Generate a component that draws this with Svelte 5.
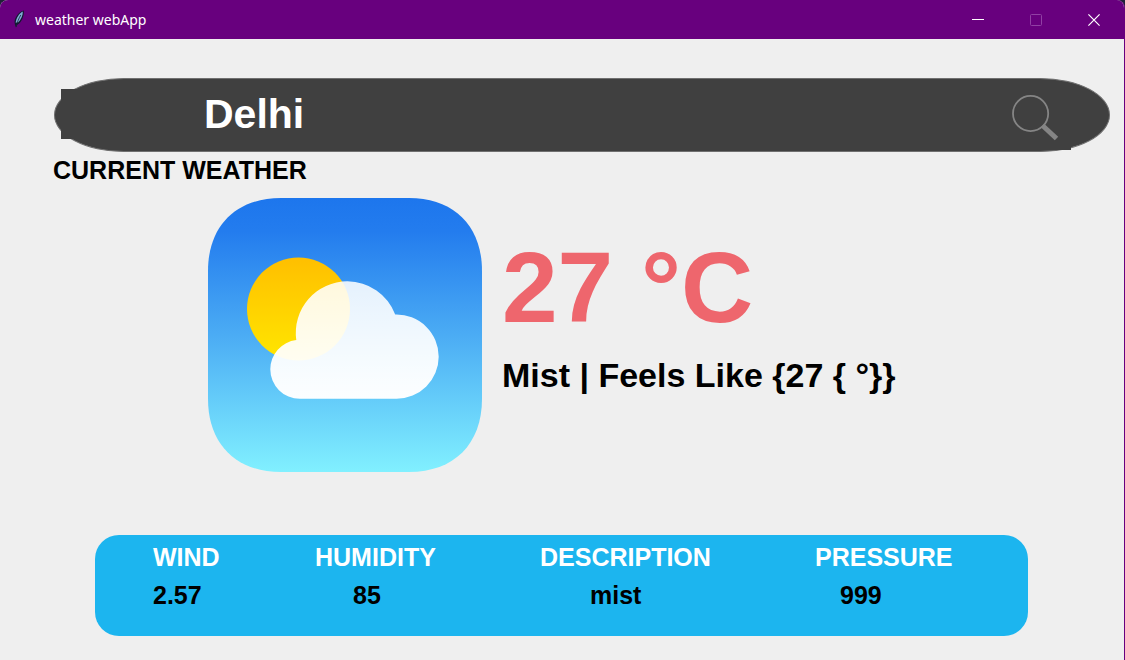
<script>
  let city = $state('Delhi');

  const stats = [
    { label: 'WIND', value: '2.57', indent: 'none' },
    { label: 'HUMIDITY', value: '85', indent: 'medium' },
    { label: 'DESCRIPTION', value: 'mist', indent: 'large' },
    { label: 'PRESSURE', value: '999', indent: 'small' }
  ];
  const feels = 'Mist | Feels Like {27 { °}}';
</script>

<div class="window">
  <header class="titlebar">
    <svg class="feather" width="14" height="20" viewBox="0 0 14 20" aria-hidden="true">
      <path d="M11.800 .6C7.500 1.600 3 6.500 2.500 12L3 15L4 17.500L5 15L7.500 13.300C10.600 10 12.300 5 11.800 .6Z" fill="#121a30" />
      <path d="M10.800 1.600C7.400 3.400 4 8 3.700 12.800L6.400 12.200C9.300 9 11 5.400 10.800 1.600Z" fill="#7fabd6" />
      <path d="M8.800 5C7 8 5.200 12 4.200 17" fill="none" stroke="#16203c" stroke-width=".8" />
    </svg>
    <span class="title">weather webApp</span>
    <div class="controls">
      <button type="button" aria-label="Minimize">
        <svg width="12" height="12" viewBox="0 0 12 12"><path d="M0 5.500H12" stroke="#fff" /></svg>
      </button>
      <button type="button" aria-label="Maximize" disabled>
        <svg width="12" height="12" viewBox="0 0 12 12"><rect x=".5" y=".5" width="11" height="11" rx="1" fill="none" stroke="#9140a4" /></svg>
      </button>
      <button type="button" aria-label="Close">
        <svg width="12" height="12" viewBox="0 0 12 12"><path d="M.4 .4L11.600 11.600M11.600 .4L.4 11.600" stroke="#fff" stroke-width="1.200" /></svg>
      </button>
    </div>
  </header>

  <main>
    <form class="search" onsubmit={(e) => e.preventDefault()}>
      <input type="text" aria-label="City" bind:value={city} />
      <button type="submit" aria-label="Search">
        <svg width="50" height="50" viewBox="0 0 50 50" aria-hidden="true">
          <circle cx="20.600" cy="21.500" r="17.600" fill="none" stroke="#858585" stroke-width="1.800" />
          <path d="M32.500 33.500L46.500 46.500" stroke="#858585" stroke-width="5" />
        </svg>
      </button>
    </form>

    <h1>CURRENT WEATHER</h1>

    <section class="current">
      <svg class="picture" width="274" height="274" viewBox="0 0 274 274" role="img" aria-label="Partly cloudy">
        <defs>
          <linearGradient id="sky" x1="0" y1="0" x2="0" y2="1">
            <stop offset="0" stop-color="#1d76ed" />
            <stop offset=".12" stop-color="#237cee" />
            <stop offset=".5" stop-color="#4bacf4" />
            <stop offset="1" stop-color="#81f0ff" />
          </linearGradient>
          <linearGradient id="sun" x1="0" y1="0" x2="0" y2="1">
            <stop offset="0" stop-color="#ffbf00" />
            <stop offset="1" stop-color="#ffe600" />
          </linearGradient>
          <linearGradient id="cloud" x1="0" y1="0" x2="0" y2="1">
            <stop offset="0" stop-color="#fff" stop-opacity=".87" />
            <stop offset="1" stop-color="#fff" stop-opacity=".98" />
          </linearGradient>
        </defs>
        <path d="M73 0H201C246 0 274 28 274 73V201C274 246 246 274 201 274H73C28 274 0 246 0 201V73C0 28 28 0 73 0Z" fill="url(#sky)" />
        <circle cx="90.500" cy="111" r="51.500" fill="url(#sun)" />
        <path d="M91.800 200.800A29.500 29.500 0 0 1 62.300 171.300A29.500 29.500 0 0 1 88.300 142A51.500 51.500 0 0 1 139.500 83.300A51.500 51.500 0 0 1 187.200 116.500A42.200 42.200 0 0 1 230.700 158.700A42.200 42.200 0 0 1 188.500 200.800Z" fill="url(#cloud)" />
      </svg>
      <div class="reading">
        <p class="temperature">27 °C</p>
        <p class="feels">{feels}</p>
      </div>
    </section>

    <dl class="stats">
      {#each stats as stat}
        <div>
          <dt>{stat.label}</dt>
          <dd class={stat.indent}>{stat.value}</dd>
        </div>
      {/each}
    </dl>
  </main>
</div>

<style>
  :global(body) {
    margin: 0;
    background: #1f2138;
  }

  .window {
    box-sizing: border-box;
    display: flex;
    flex-direction: column;
    min-height: 100vh;
    overflow: hidden;
    border-right: 1px solid #68007e;
    border-radius: 8px 8px 0 0;
    background: #efefef;
    font-family: "Liberation Sans", Arial, sans-serif;
    font-weight: bold;
    color: #000;
  }

  .titlebar {
    display: flex;
    align-items: center;
    height: 39px;
    padding-left: 12px;
    background: #68007e;
    color: #fff;
  }

  .title {
    margin-left: 9px;
    font: 14px "Noto Sans", "Segoe UI", sans-serif;
  }

  .controls {
    display: flex;
    align-self: stretch;
    margin-left: auto;
    padding-right: 1px;
  }

  button {
    display: flex;
    align-items: center;
    justify-content: center;
    padding: 0;
    border: 0;
    background: none;
  }

  .controls button {
    width: 58px;
  }

  .search {
    display: flex;
    align-items: center;
    box-sizing: border-box;
    height: 74px;
    margin: 39px 14px 0 54px;
    padding: 0 38px 2px 6px;
    border: 1px solid #707070;
    border-radius: 70px / 50%;
    background: #404040;
  }

  .search input {
    flex: 1;
    min-width: 0;
    height: 50px;
    box-sizing: border-box;
    padding: 0 0 0 143px;
    border: 0;
    outline: 0;
    background: #404040;
    color: #fff;
    font: bold 41px "Liberation Sans", Arial, sans-serif;
  }

  .search button {
    align-self: flex-end;
    width: 61px;
    height: 60px;
    padding-bottom: 7px;
    margin-bottom: -1px;
    justify-content: flex-start;
    background: #404040;
  }

  h1 {
    margin: 0 53px;
    font-size: 25px;
    line-height: 36px;
  }

  .current {
    display: flex;
    gap: 20px;
    margin: 10px 0 0 208px;
  }

  .picture {
    flex: none;
  }

  .reading {
    padding-top: 33px;
  }

  .temperature,
  .feels {
    margin: 0;
    white-space: nowrap;
  }

  .temperature {
    color: #ee666d;
    font-size: 100px;
    line-height: 112px;
  }

  .feels {
    margin-top: 10px;
    font-size: 34px;
    line-height: 44px;
  }

  .stats {
    display: grid;
    grid-template-columns: 162fr 225fr 275fr 213fr;
    margin: 63px 96px 24px 95px;
    padding: 3px 0 22px 58px;
    border-radius: 24px;
    background: #1cb5ef;
    font-size: 25px;
    line-height: 38px;
  }

  dt {
    color: #fff;
  }

  dd {
    margin: 0;
  }

  .small {
    padding-left: 25px;
  }

  .medium {
    padding-left: 38px;
  }

  .large {
    padding-left: 50px;
  }
</style>
